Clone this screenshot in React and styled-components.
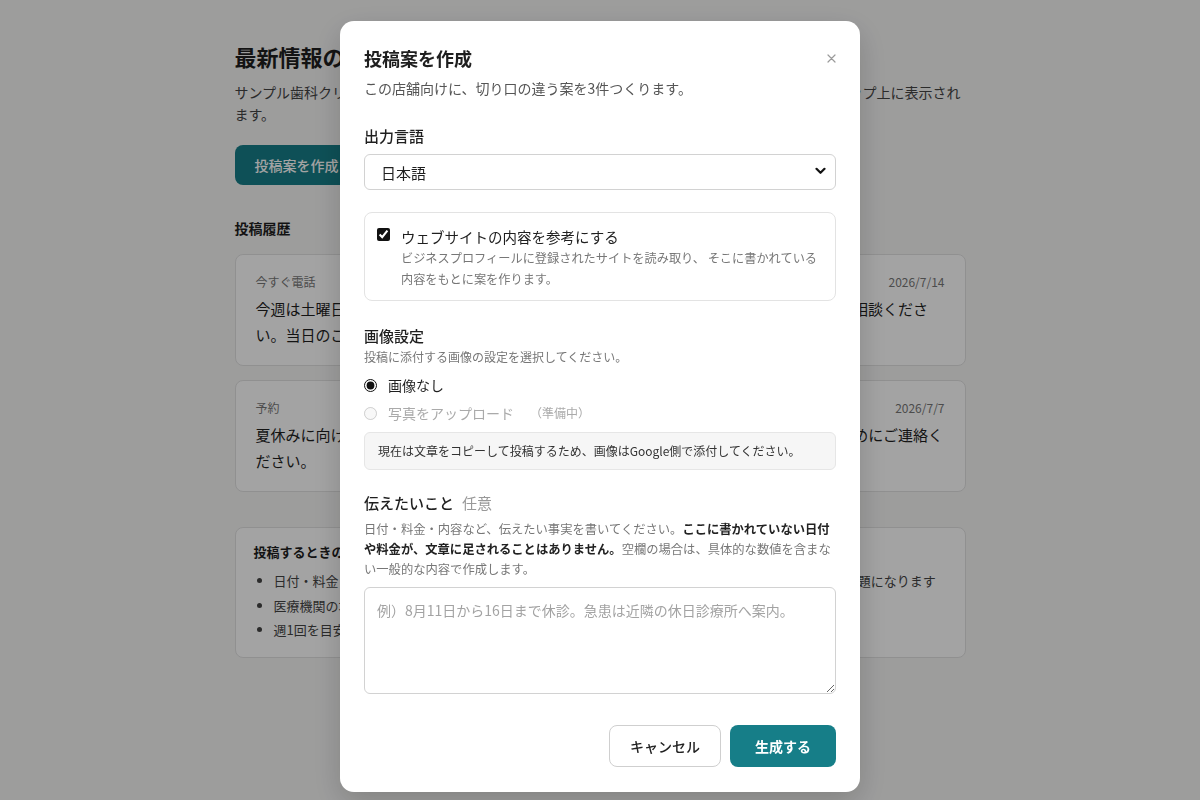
import React from 'react';
import styled, { createGlobalStyle } from 'styled-components';

const GlobalStyle = createGlobalStyle`
  * {
    box-sizing: border-box;
  }

  body {
    margin: 0;
    background: #f6f6f5;
    color: #1f1f1f;
    font-family: 'Noto Sans CJK JP', 'Noto Sans', sans-serif;
  }
`;

const teal = '#167e88';

/* ---------- page behind the dialog ---------- */

const Page = styled.main`
  max-width: 731px;
  margin: 0 auto;
  padding: 41px 0 80px;
`;

const PageTitle = styled.h1`
  margin: 0;
  font-size: 22px;
  line-height: 30px;
  font-weight: 700;
`;

const PageLead = styled.p`
  margin: 10px 0 0;
  font-size: 14px;
  line-height: 22px;
  color: #444;
`;

const PrimaryButton = styled.button`
  height: ${({ $h }) => $h || 40}px;
  padding: 0 ${({ $px }) => $px || 20}px;
  border: 0;
  border-radius: 8px;
  background: ${teal};
  color: #fff;
  font-family: inherit;
  font-size: 14px;
  font-weight: 600;
`;

const CreateButton = styled(PrimaryButton)`
  margin-top: 20px;
  font-weight: 500;
`;

const SectionTitle = styled.h2`
  margin: 33px 0 16px;
  font-size: 14px;
  line-height: 20px;
  font-weight: 700;
`;

const PostList = styled.div`
  display: flex;
  flex-direction: column;
  gap: 14px;
`;

const PostCard = styled.article`
  padding: 18px 20px 17px;
  border: 1px solid #e2e2e2;
  border-radius: 8px;
  background: #fff;
`;

const PostMeta = styled.div`
  display: flex;
  justify-content: space-between;
  font-size: 12px;
  line-height: 18px;
  color: #777;
`;

const PostBody = styled.p`
  margin: 5px 0 0;
  font-size: 15px;
  line-height: 26px;
`;

const NoticeBox = styled.section`
  margin-top: 35px;
  padding: 14px 18px 14px;
  border: 1px solid #e2e2e2;
  border-radius: 8px;
  background: #fff;
`;

const NoticeTitle = styled.h3`
  margin: 0;
  font-size: 13px;
  line-height: 20px;
  font-weight: 700;
`;

const NoticeList = styled.ul`
  margin: 7px 0 0;
  padding-left: 20px;
  font-size: 13px;
  line-height: 24.5px;
  color: #444;
`;

/* ---------- dialog ---------- */

const Overlay = styled.div`
  position: fixed;
  inset: 0;
  display: flex;
  justify-content: center;
  align-items: flex-start;
  padding-top: 21px;
  background: rgba(0, 0, 0, 0.36);
`;

const Dialog = styled.div`
  width: 520px;
  padding: 24px 24px 25px;
  border-radius: 14px;
  background: #fff;
  box-shadow: 0 10px 30px rgba(0, 0, 0, 0.18);
`;

const DialogHeader = styled.div`
  display: flex;
  justify-content: space-between;
  align-items: center;
`;

const DialogTitle = styled.h2`
  margin: 0;
  font-size: 18px;
  line-height: 26px;
  font-weight: 700;
`;

const CloseButton = styled.button`
  display: flex;
  align-items: center;
  justify-content: center;
  width: 20px;
  height: 20px;
  margin-right: -5px;
  padding: 0;
  border: 0;
  background: none;
`;

const DialogLead = styled.p`
  margin: 6px 0 0;
  font-size: 14px;
  line-height: 22px;
  color: #555;
`;

const Field = styled.div`
  margin-top: ${({ $mt }) => $mt}px;
`;

const Label = styled.div`
  font-size: 15px;
  line-height: 22px;
  font-weight: 500;
  color: #1f1f1f;

  span {
    margin-left: 8px;
    font-weight: 400;
    color: #999;
  }
`;

const SelectWrap = styled.div`
  position: relative;
  margin-top: 7px;

  svg {
    position: absolute;
    right: 10px;
    top: 13px;
    pointer-events: none;
  }
`;

const Select = styled.select`
  width: 100%;
  height: 36px;
  padding: 0 16px;
  border: 1px solid #d2d2d2;
  border-radius: 6px;
  background: #fff;
  color: #1f1f1f;
  font-family: inherit;
  font-size: 15px;
  appearance: none;
`;

const OptionCard = styled.label`
  display: grid;
  grid-template-columns: 13px 1fr;
  column-gap: 11px;
  padding: 13px 12px 10px 12px;
  border: 1px solid #e3e3e3;
  border-radius: 8px;

  input {
    margin: 2px 0 0;
    width: 13px;
    height: 13px;
    accent-color: #111;
  }
`;

const OptionTitle = styled.div`
  font-size: 14.5px;
  line-height: 22px;
`;

const OptionText = styled.div`
  font-size: 12.2px;
  line-height: 21px;
  color: #777;
`;

const Hint = styled.p`
  margin: ${({ $mt }) => $mt || 1}px 0 0;
  font-size: ${({ $fs }) => $fs || 12}px;
  line-height: ${({ $lh }) => $lh || 18}px;
  color: #777;

  strong {
    font-weight: 700;
    color: #222;
  }
`;

const RadioGroup = styled.div`
  display: flex;
  flex-direction: column;
  gap: 6px;
  margin-top: 8px;
`;

const RadioRow = styled.label`
  display: flex;
  align-items: center;
  gap: 11px;
  font-size: 14px;
  line-height: 22px;
  color: ${({ $disabled }) => ($disabled ? '#aaa' : '#1f1f1f')};

  input {
    margin: 0;
    width: 13px;
    height: 13px;
    accent-color: #111;
  }

  small {
    margin-left: 5px;
    font-size: 12px;
    color: #aaa;
  }
`;

const InfoBox = styled.div`
  margin-top: 8px;
  padding: 9px 13px;
  border: 1px solid #e6e6e6;
  border-radius: 6px;
  background: #f6f6f6;
  font-size: 12px;
  line-height: 18px;
  color: #333;
`;

const TextArea = styled.textarea`
  display: block;
  width: 100%;
  height: 107px;
  margin-top: 8px;
  padding: 11px 12px;
  border: 1px solid #d2d2d2;
  border-radius: 6px;
  font-family: inherit;
  font-size: 14px;
  line-height: 22px;
  color: #1f1f1f;

  &::placeholder {
    color: #a3a3a3;
  }
`;

const Actions = styled.div`
  display: flex;
  justify-content: flex-end;
  gap: 9px;
  margin-top: 31px;
`;

const GhostButton = styled.button`
  height: 42px;
  padding: 0 20px;
  border: 1px solid #cfcfcf;
  border-radius: 8px;
  background: #fff;
  color: #222;
  font-family: inherit;
  font-size: 14px;
  font-weight: 500;
`;

const Chevron = () => (
  <svg width="11" height="8" viewBox="0 0 11 8">
    <path d="M1.5 1.8 5.5 5.8 9.5 1.8" fill="none" stroke="#111" strokeWidth="2.2" strokeLinecap="round" strokeLinejoin="round" />
  </svg>
);

const CloseIcon = () => (
  <svg width="9" height="9" viewBox="0 0 9 9">
    <path d="M1 1 8 8M8 1 1 8" stroke="#9a9a9a" strokeWidth="1.2" strokeLinecap="round" />
  </svg>
);

const posts = [
  {
    tag: '今すぐ電話',
    date: '2026/7/14',
    body: '今週は土曜日も通常どおり診療しております。お仕事や学校で平日に来院が難しい方もご相談ください。当日のご予約も受け付けています。',
  },
  {
    tag: '予約',
    date: '2026/7/7',
    body: '夏休みに向けて、お子さまの歯科検診のご予約を受け付けています。ご希望の方は、お早めにご連絡ください。',
  },
];

const notes = [
  '日付・料金・内容に誤りがないか確認してください。事実と異なる表現や誇大表現は広告規制上の問題になります',
  '医療機関の場合、治療効果を保証する表現は使えません',
  '週1回を目安に投稿すると、情報が新しく保たれます',
];

const App = () => {
  return (
    <>
      <GlobalStyle />
      <Page>
        <PageTitle>最新情報の投稿</PageTitle>
        <PageLead>
          サンプル歯科クリニックのビジネスプロフィールに投稿します。投稿した内容は、検索の結果やマップ上に表示されます。
        </PageLead>
        <CreateButton>投稿案を作成</CreateButton>

        <SectionTitle>投稿履歴</SectionTitle>
        <PostList>
          {posts.map((post) => (
            <PostCard key={post.date}>
              <PostMeta>
                <span>{post.tag}</span>
                <span>{post.date}</span>
              </PostMeta>
              <PostBody>{post.body}</PostBody>
            </PostCard>
          ))}
        </PostList>

        <NoticeBox>
          <NoticeTitle>投稿するときの注意</NoticeTitle>
          <NoticeList>
            {notes.map((note, i) => (
              <li key={i}>{note}</li>
            ))}
          </NoticeList>
        </NoticeBox>
      </Page>

      <Overlay>
        <Dialog role="dialog">
          <DialogHeader>
            <DialogTitle>投稿案を作成</DialogTitle>
            <CloseButton aria-label="閉じる">
              <CloseIcon />
            </CloseButton>
          </DialogHeader>
          <DialogLead>この店舗向けに、切り口の違う案を3件つくります。</DialogLead>

          <Field $mt={26}>
            <Label>出力言語</Label>
            <SelectWrap>
              <Select defaultValue="ja">
                <option value="ja">日本語</option>
                <option value="en">English</option>
              </Select>
              <Chevron />
            </SelectWrap>
          </Field>

          <Field $mt={22}>
            <OptionCard>
              <input type="checkbox" defaultChecked />
              <div>
                <OptionTitle>ウェブサイトの内容を参考にする</OptionTitle>
                <OptionText>
                  ビジネスプロフィールに登録されたサイトを読み取り、 そこに書かれている内容をもとに案を作ります。
                </OptionText>
              </div>
            </OptionCard>
          </Field>

          <Field $mt={24}>
            <Label>画像設定</Label>
            <Hint>投稿に添付する画像の設定を選択してください。</Hint>
            <RadioGroup>
              <RadioRow>
                <input type="radio" name="image" defaultChecked />
                画像なし
              </RadioRow>
              <RadioRow $disabled>
                <input type="radio" name="image" disabled />
                写真をアップロード
                <small>（準備中）</small>
              </RadioRow>
            </RadioGroup>
            <InfoBox>現在は文章をコピーして投稿するため、画像はGoogle側で添付してください。</InfoBox>
          </Field>

          <Field $mt={22}>
            <Label>
              伝えたいこと<span>任意</span>
            </Label>
            <Hint $mt={5} $fs={12.3} $lh={20}>
              日付・料金・内容など、伝えたい事実を書いてください。
              <strong>ここに書かれていない日付や料金が、文章に足されることはありません。</strong>
              空欄の場合は、具体的な数値を含まない一般的な内容で作成します。
            </Hint>
            <TextArea placeholder="例）8月11日から16日まで休診。急患は近隣の休日診療所へ案内。" />
          </Field>

          <Actions>
            <GhostButton>キャンセル</GhostButton>
            <PrimaryButton $h={42} $px={25}>生成する</PrimaryButton>
          </Actions>
        </Dialog>
      </Overlay>
    </>
  );
};

export default App;
